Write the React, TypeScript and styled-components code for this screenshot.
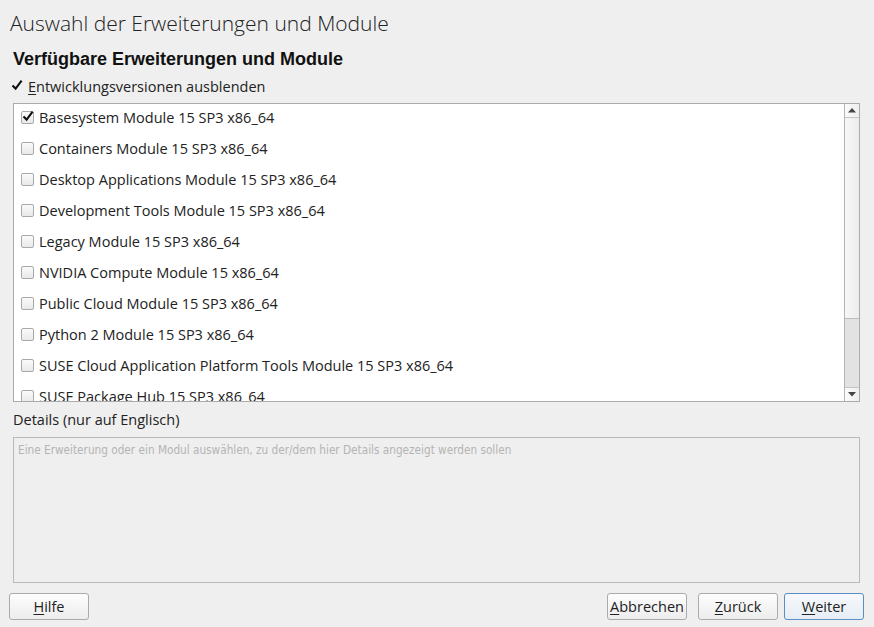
import React from 'react';
import styled, { createGlobalStyle } from 'styled-components';

const GlobalStyle = createGlobalStyle`
  html, body {
    margin: 0;
    padding: 0;
    background: #efefef;
  }
  body {
    font-family: "Open Sans", "Noto Sans", sans-serif;
    color: #222;
  }
`;

const modules = [
  { name: 'Basesystem Module 15 SP3 x86_64', checked: true },
  { name: 'Containers Module 15 SP3 x86_64' },
  { name: 'Desktop Applications Module 15 SP3 x86_64' },
  { name: 'Development Tools Module 15 SP3 x86_64' },
  { name: 'Legacy Module 15 SP3 x86_64' },
  { name: 'NVIDIA Compute Module 15 x86_64' },
  { name: 'Public Cloud Module 15 SP3 x86_64' },
  { name: 'Python 2 Module 15 SP3 x86_64' },
  { name: 'SUSE Cloud Application Platform Tools Module 15 SP3 x86_64' },
  { name: 'SUSE Package Hub 15 SP3 x86_64' },
];

const Page = styled.div`
  width: 874px;
  height: 627px;
  box-sizing: border-box;
  display: flex;
  flex-direction: column;
  background: #efefef;
  overflow: hidden;
`;

const Title = styled.h1`
  margin: 0;
  padding: 9px 0 0 10px;
  height: 37px;
  box-sizing: border-box;
  font-family: "Open Sans", sans-serif;
  font-weight: 300;
  font-size: 21px;
  line-height: 28px;
  color: #222;
`;

const Content = styled.div`
  display: flex;
  flex-direction: column;
  padding: 0 14px 0 13px;
`;

const Heading = styled.h2`
  margin: 0;
  height: 37px;
  font-family: "Liberation Sans", Arial, sans-serif;
  font-weight: bold;
  font-size: 18px;
  line-height: 44px;
  color: #111;
`;

const CheckRow = styled.label`
  display: flex;
  align-items: center;
  gap: 6px;
  height: 24px;
  margin-left: -3px;
  font-size: 14.5px;
  color: #222;
`;

const Box = styled.span<{ $size?: number; $flat?: boolean }>`
  position: relative;
  flex: none;
  width: ${p => p.$size ?? 11}px;
  height: ${p => p.$size ?? 11}px;
  box-sizing: border-box;
  border: 1px solid ${p => (p.$flat ? 'transparent' : '#a9a9a9')};
  border-radius: 2px;
  background: ${p => (p.$flat ? 'transparent' : 'linear-gradient(#fafafa, #e9e9e9)')};
  display: flex;
  align-items: center;
  justify-content: center;
`;

const Mnemonic = styled.span`
  text-decoration: underline;
  text-underline-offset: 2px;
`;

const ListFrame = styled.div`
  margin-top: 5px;
  height: 299px;
  box-sizing: border-box;
  border: 1px solid #ababab;
  background: #fff;
  display: flex;
  overflow: hidden;
`;

const List = styled.div`
  flex: 1;
  display: flex;
  flex-direction: column;
  gap: 5px;
  padding-left: 7px;
  overflow: hidden;
`;

const Item = styled.div`
  flex: none;
  height: 26px;
  display: flex;
  align-items: center;
  gap: 5px;
  font-size: 14.5px;
  color: #222;
  white-space: nowrap;
`;

const ScrollBar = styled.div`
  width: 14px;
  flex: none;
  border-left: 1px solid #b4b4b4;
  display: flex;
  flex-direction: column;
  background: #e2e2e2;
`;

const Arrow = styled.div<{ $down?: boolean }>`
  height: 14px;
  flex: none;
  box-sizing: border-box;
  background: linear-gradient(to right, #fbfbfb, #eeeeee);
  ${p => (p.$down ? 'border-top: 1px solid #c4c4c4;' : 'border-bottom: 1px solid #c4c4c4;')}
  display: flex;
  align-items: center;
  justify-content: center;
`;

const Thumb = styled.div`
  height: 201px;
  flex: none;
  box-sizing: border-box;
  border-bottom: 1px solid #bdbdbd;
  background: linear-gradient(to right, #f7f7f7, #ececec);
`;

const Track = styled.div`
  flex: 1;
`;

const DetailsLabel = styled.div`
  height: 35px;
  display: flex;
  align-items: center;
  font-size: 14.5px;
  color: #222;
`;

const Details = styled.div`
  height: 146px;
  box-sizing: border-box;
  border: 1px solid #b9b9b9;
  background: #efefef;
  padding: 5px 4px;
  font-family: "DejaVu Sans", sans-serif;
  font-stretch: condensed;
  font-size: 11.7px;
  color: #b4b4b4;
`;

const ButtonBar = styled.div`
  display: flex;
  align-items: center;
  padding: 10px 10px 0 9px;
`;

const Spacer = styled.div`
  flex: 1;
`;

const Button = styled.button<{ $focus?: boolean; $gap?: number }>`
  width: 80px;
  height: 27px;
  margin-left: ${p => p.$gap ?? 0}px;
  box-sizing: border-box;
  border: 1px solid ${p => (p.$focus ? '#5a8fc6' : '#ababab')};
  border-radius: 3px;
  background: ${p => (p.$focus ? 'linear-gradient(#f6f9fc, #e6edf5)' : 'linear-gradient(#fdfdfd, #ededed)')};
  font-family: "Open Sans", sans-serif;
  font-size: 14.5px;
  color: #222;
  padding: 0;
`;

const CheckSvg = styled.svg`
  position: absolute;
  left: 0;
  top: -2px;
`;

const Check = ({ size = 12 }: { size?: number }) => (
  <CheckSvg width={size} height={size} viewBox="0 0 12 12">
    <path d="M1.5 6.5 L4.6 9.6 L10.6 1.6" fill="none" stroke="#111" strokeWidth="2.1" />
  </CheckSvg>
);

const Tri = ({ down }: { down?: boolean }) => (
  <svg width="8" height="5" viewBox="0 0 8 5">
    <path d={down ? 'M0 0 H8 L4 4.5 Z' : 'M0 4.5 H8 L4 0 Z'} fill="#444" />
  </svg>
);

export default function App() {
  return (
    <Page>
      <GlobalStyle />
      <Title>Auswahl der Erweiterungen und Module</Title>
      <Content>
        <Heading>Verfügbare Erweiterungen und Module</Heading>
        <CheckRow>
          <Box $flat $size={12}>
            <Check size={12} />
          </Box>
          <span>
            <Mnemonic>E</Mnemonic>ntwicklungsversionen ausblenden
          </span>
        </CheckRow>
        <ListFrame>
          <List>
            {modules.map(m => (
              <Item key={m.name}>
                <Box $size={13}>{m.checked && <Check size={12} />}</Box>
                {m.name}
              </Item>
            ))}
          </List>
          <ScrollBar>
            <Arrow>
              <Tri />
            </Arrow>
            <Thumb />
            <Track />
            <Arrow $down>
              <Tri down />
            </Arrow>
          </ScrollBar>
        </ListFrame>
        <DetailsLabel>Details (nur auf Englisch)</DetailsLabel>
        <Details>
          Eine Erweiterung oder ein Modul auswählen, zu der/dem hier Details angezeigt werden sollen
        </Details>
      </Content>
      <ButtonBar>
        <Button>
          <Mnemonic>H</Mnemonic>ilfe
        </Button>
        <Spacer />
        <Button>
          <Mnemonic>A</Mnemonic>bbrechen
        </Button>
        <Button $gap={11}>
          <Mnemonic>Z</Mnemonic>urück
        </Button>
        <Button $gap={6} $focus>
          <Mnemonic>W</Mnemonic>eiter
        </Button>
      </ButtonBar>
    </Page>
  );
}
